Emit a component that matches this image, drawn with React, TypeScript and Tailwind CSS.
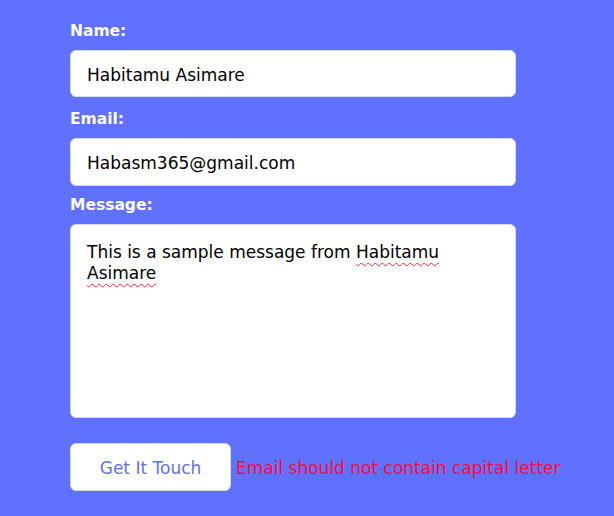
const fieldBox =
  'w-[446px] rounded-md border border-[#d4d8e8] bg-white px-4 text-[17px] text-black';

const Label = ({ children }: { children: string }) => (
  <label className="block text-[15.5px] font-semibold leading-6 text-white">{children}</label>
);

const Spell = ({ children }: { children: string }) => (
  <span className="underline decoration-wavy decoration-red-500 decoration-1 underline-offset-4">
    {children}
  </span>
);

export default function App() {
  return (
    <div
      className="min-h-[516px] w-full bg-[#6171ff] pl-[70px] pt-[19px]"
      style={{ fontFamily: '"DejaVu Sans", "Open Sans", sans-serif' }}
    >
      <div className="flex flex-col">
        <Label>Name:</Label>
        <div className={`${fieldBox} mt-[7px] flex h-[47px] items-center pt-[4px]`}>Habitamu Asimare</div>

        <div className="mt-[10px]">
          <Label>Email:</Label>
        </div>
        <div className={`${fieldBox} mt-[7px] flex h-[48px] items-center pt-[4px]`}>Habasm365@gmail.com</div>

        <div className="mt-[7px]">
          <Label>Message:</Label>
        </div>
        <div className={`${fieldBox} mt-[7px] h-[194px] pt-[17px] leading-[21px]`}>
          This is a sample message from <Spell>Habitamu</Spell>
          <br />
          <Spell>Asimare</Spell>
        </div>

        <div className="mt-[25px] flex items-center">
          <button className="h-[48px] w-[161px] rounded-md border border-[#d4d8e8] bg-white pt-[4px] text-[17px] text-[#6171ff]">
            Get It Touch
          </button>
          <span className="ml-[5px] mt-[4px] text-[17px] text-[#ff0a3c]">Email should not contain capital letter</span>
        </div>
      </div>
    </div>
  );
}
